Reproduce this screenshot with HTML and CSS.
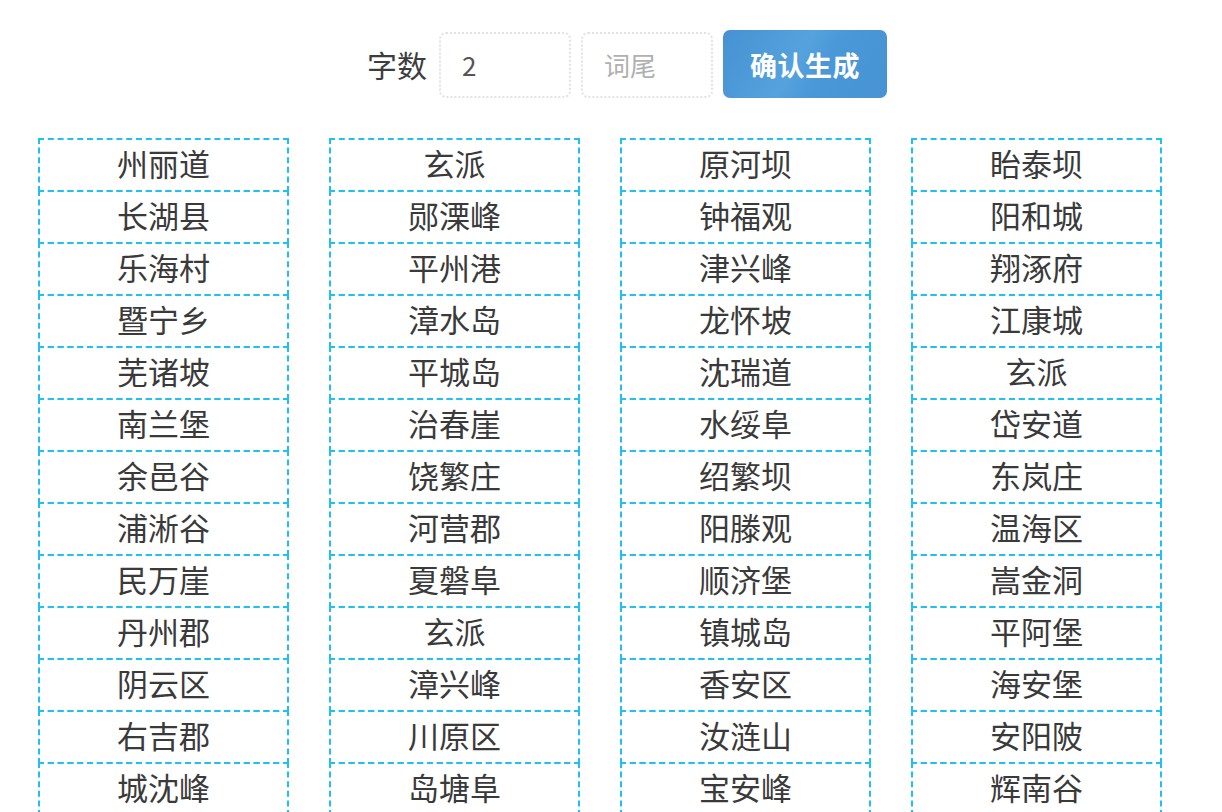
FILE: index.html
```html
<!DOCTYPE html>
<html lang="zh-CN">
<head>
<meta charset="utf-8">
<title>地名生成</title>
<link rel="stylesheet" href="styles.css">
</head>
<body>
<div class="page">
  <form class="controls">
    <label class="label" for="count">字数</label>
    <input class="field" id="count" type="text" value="2">
    <input class="field" type="text" placeholder="词尾">
    <button class="btn" type="button">确认生成</button>
  </form>
  <div class="grid">
    <ul class="col">
      <li>州丽道</li><li>长湖县</li><li>乐海村</li><li>暨宁乡</li><li>芜诸坡</li><li>南兰堡</li><li>余邑谷</li><li>浦淅谷</li><li>民万崖</li><li>丹州郡</li><li>阴云区</li><li>右吉郡</li><li>城沈峰</li>
    </ul>
    <ul class="col">
      <li>玄派</li><li>郧溧峰</li><li>平州港</li><li>漳水岛</li><li>平城岛</li><li>治春崖</li><li>饶繁庄</li><li>河营郡</li><li>夏磐阜</li><li>玄派</li><li>漳兴峰</li><li>川原区</li><li>岛塘阜</li>
    </ul>
    <ul class="col">
      <li>原河坝</li><li>钟福观</li><li>津兴峰</li><li>龙怀坡</li><li>沈瑞道</li><li>水绥阜</li><li>绍繁坝</li><li>阳滕观</li><li>顺济堡</li><li>镇城岛</li><li>香安区</li><li>汝涟山</li><li>宝安峰</li>
    </ul>
    <ul class="col">
      <li>眙泰坝</li><li>阳和城</li><li>翔涿府</li><li>江康城</li><li>玄派</li><li>岱安道</li><li>东岚庄</li><li>温海区</li><li>嵩金洞</li><li>平阿堡</li><li>海安堡</li><li>安阳陂</li><li>辉南谷</li>
    </ul>
  </div>
</div>
</body>
</html>
```

FILE: styles.css
```css
html, body {
  margin: 0;
  padding: 0;
  background: #ffffff;
}
body {
  font-family: "Noto Sans CJK SC", "Noto Sans", sans-serif;
  color: #3d3d3d;
}
.page {
  padding: 30px 0 0 38px;
}
.controls {
  display: flex;
  align-items: center;
  margin: 0 0 0 329px;
  height: 68px;
}
.label {
  font-size: 30px;
  line-height: 1;
  color: #3d3d3d;
  margin-right: 12px;
}
.field {
  box-sizing: border-box;
  width: 132px;
  height: 66px;
  margin: 1px 10px 0 0;
  padding: 0 0 0 21px;
  border: 2px dotted #e2e2e2;
  border-radius: 7px;
  background: #fff;
  font-family: "Noto Sans CJK SC", "Liberation Sans", sans-serif;
  font-size: 26px;
  color: #555;
  outline: none;
}
.field::placeholder {
  color: #b0b0b0;
}
.btn {
  box-sizing: border-box;
  width: 164px;
  height: 68px;
  border: 0;
  border-radius: 7px;
  background: linear-gradient(120deg, #4691d2 0%, #55a2de 45%, #4a98d8 60%, #4793d4 100%);
  color: #fff;
  font-family: "Noto Sans CJK SC", sans-serif;
  font-size: 27px;
  font-weight: 700;
  letter-spacing: 0.5px;
  padding: 0;
}
.grid {
  display: grid;
  grid-template-columns: repeat(4, 251px);
  column-gap: 40px;
  margin-top: 40px;
}
.col {
  list-style: none;
  margin: 0;
  padding: 0;
}
.col li {
  box-sizing: border-box;
  height: 54px;
  margin-top: -2px;
  padding-bottom: 4px;
  border: 2px dashed #1fc0f4;
  font-size: 31px;
  line-height: 46px;
  text-align: center;
  color: #3a3a3a;
}
.col li:first-child {
  margin-top: 0;
}
```
